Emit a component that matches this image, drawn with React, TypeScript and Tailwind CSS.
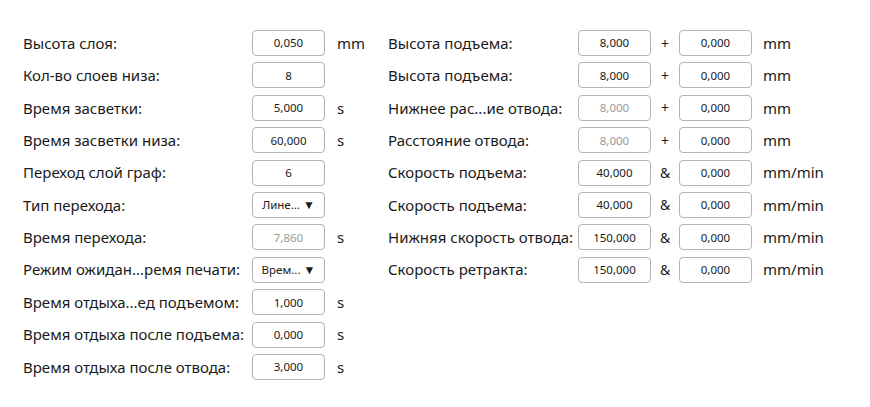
import React from "react";

type Field = { value: string; disabled?: boolean; select?: boolean };

function Box({ value, disabled, select }: Field) {
  return (
    <div className="flex h-[26px] w-[73px] items-center justify-center rounded-[4px] border border-[#b4b4b4] bg-white text-[11.5px]">
      <span className={disabled ? "text-[#9a9a9a]" : "text-[#1a1a1a]"}>{value}</span>
      {select && <span className="ml-[3px] text-[12px] leading-none text-[#1a1a1a]">▼</span>}
    </div>
  );
}

const left: { label: string; field: Field; unit?: string }[] = [
  { label: "Высота слоя:", field: { value: "0,050" }, unit: "mm" },
  { label: "Кол-во слоев низа:", field: { value: "8" } },
  { label: "Время засветки:", field: { value: "5,000" }, unit: "s" },
  { label: "Время засветки низа:", field: { value: "60,000" }, unit: "s" },
  { label: "Переход слой граф:", field: { value: "6" } },
  { label: "Тип перехода:", field: { value: "Лине...", select: true } },
  { label: "Время перехода:", field: { value: "7,860", disabled: true }, unit: "s" },
  { label: "Режим ожидан...ремя печати:", field: { value: "Врем...", select: true } },
  { label: "Время отдыха...ед подъемом:", field: { value: "1,000" }, unit: "s" },
  { label: "Время отдыха после подъема:", field: { value: "0,000" }, unit: "s" },
  { label: "Время отдыха после отвода:", field: { value: "3,000" }, unit: "s" },
];

const right: { label: string; a: Field; op: string; b: Field; unit: string }[] = [
  { label: "Высота подъема:", a: { value: "8,000" }, op: "+", b: { value: "0,000" }, unit: "mm" },
  { label: "Высота подъема:", a: { value: "8,000" }, op: "+", b: { value: "0,000" }, unit: "mm" },
  { label: "Нижнее рас...ие отвода:", a: { value: "8,000", disabled: true }, op: "+", b: { value: "0,000" }, unit: "mm" },
  { label: "Расстояние отвода:", a: { value: "8,000", disabled: true }, op: "+", b: { value: "0,000" }, unit: "mm" },
  { label: "Скорость подъема:", a: { value: "40,000" }, op: "&", b: { value: "0,000" }, unit: "mm/min" },
  { label: "Скорость подъема:", a: { value: "40,000" }, op: "&", b: { value: "0,000" }, unit: "mm/min" },
  { label: "Нижняя скорость отвода:", a: { value: "150,000" }, op: "&", b: { value: "0,000" }, unit: "mm/min" },
  { label: "Скорость ретракта:", a: { value: "150,000" }, op: "&", b: { value: "0,000" }, unit: "mm/min" },
];

export default function App() {
  return (
    <div
      className="flex h-[407px] w-[870px] bg-white pt-[30px] text-[15px] text-[#1a1a1a]"
      style={{ fontFamily: '"Noto Sans", "Open Sans", sans-serif' }}
    >
      <div className="flex w-[365px] flex-col pl-[23px]">
        {left.map((r, i) => (
          <div key={i} className="flex h-[32.4px] items-start">
            <div className="flex h-[26px] w-[229px] items-center whitespace-nowrap">{r.label}</div>
            <Box {...r.field} />
            <div className="flex h-[26px] items-center pl-[12px]">{r.unit}</div>
          </div>
        ))}
      </div>
      <div className="flex flex-col pl-[23px]">
        {right.map((r, i) => (
          <div key={i} className="flex h-[32.4px] items-start">
            <div className="flex h-[26px] w-[190px] items-center whitespace-nowrap">{r.label}</div>
            <Box {...r.a} />
            <div className="flex h-[26px] w-[28px] items-center justify-center text-[14px]">{r.op}</div>
            <Box {...r.b} />
            <div className="flex h-[26px] items-center pl-[11px]">{r.unit}</div>
          </div>
        ))}
      </div>
    </div>
  );
}
